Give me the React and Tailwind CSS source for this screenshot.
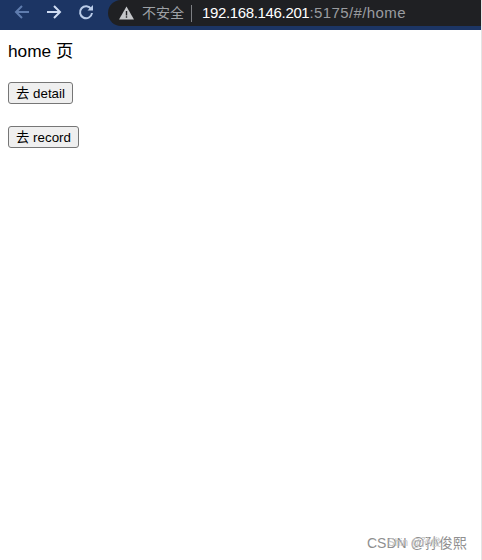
import React from "react";

const sans = '"Liberation Sans","Noto Sans CJK SC",sans-serif';

function Back({ className }) {
  return (
    <svg width="18" height="18" viewBox="0 0 18 18" fill="none" stroke="currentColor" strokeWidth="2" className={className}>
      <path d="M16 9H3M9 3L3 9l6 6" />
    </svg>
  );
}

export default function App() {
  return (
    <div className="relative w-[482px] h-[560px] bg-white overflow-hidden" style={{ fontFamily: sans }}>
      <div className="flex items-start h-[30px] bg-[#1c3564] pl-[13px]">
        <Back className="text-[#5f7cae] shrink-0 mt-[3px]" />
        <Back className="text-[#cfdcf2] rotate-180 ml-[14px] shrink-0 mt-[3px]" />
        <svg width="18" height="18" viewBox="0 0 18 18" fill="none" className="text-[#b9cbe8] ml-[14px] shrink-0 mt-[3px]">
          <path d="M14.2 6.2A6 6 0 1 0 15 10" stroke="currentColor" strokeWidth="2" />
          <path d="M10.5 7.5H16V2z" fill="currentColor" />
        </svg>
        <div className="flex items-center h-[26px] w-[373px] ml-[13px] pl-[11px] rounded-l-[14px] bg-[#1f2023] text-[15px] whitespace-nowrap">
          <svg width="15" height="14" viewBox="0 0 15 14" className="shrink-0">
            <path d="M7.5 0.5L15 13.5H0z" fill="#c4c6c9" />
            <path d="M6.8 5h1.4v4.5H6.8zM6.8 10.3h1.4v1.5H6.8z" fill="#1f2023" />
          </svg>
          <span className="ml-[8px] text-[#9ea1a6] text-[14px]">不安全</span>
          <span className="ml-[7px] w-px h-[17px] bg-[#7d7f83]" />
          <span className="ml-[10px] text-white tracking-[-0.35px]">192.168.146.201</span>
          <span className="text-[#9a9ca0] tracking-[0.4px]">:5175/#/home</span>
        </div>
        <div className="w-px h-full bg-white ml-auto" />
      </div>

      <div className="px-2 pt-[11px] text-black">
        <p className="text-[17.3px] leading-[20px]">home 页</p>
        <div className="mt-[21px]">
          <button className="block h-[22px] w-[65px] pt-px rounded-[3px] border border-[#767676] bg-[#efefef] text-[13.33px] leading-none text-center">
            去 detail
          </button>
        </div>
        <div className="mt-[22px]">
          <button className="block h-[22px] w-[71px] pt-px rounded-[3px] border border-[#767676] bg-[#efefef] text-[13.33px] leading-none text-center">
            去 record
          </button>
        </div>
      </div>

      <div className="absolute left-[367px] top-[534px] text-[14px] leading-[18px] text-[#8f8f8f] whitespace-nowrap">
        CSDN @孙俊熙
      </div>
      <div className="absolute left-[388px] top-[535px] text-[10px] leading-[16px] text-[#c4c4c4] whitespace-nowrap">
        Shin @孙俊
      </div>
      <div className="absolute right-0 top-0 w-px h-full bg-[#e4e4e4]" />
    </div>
  );
}
